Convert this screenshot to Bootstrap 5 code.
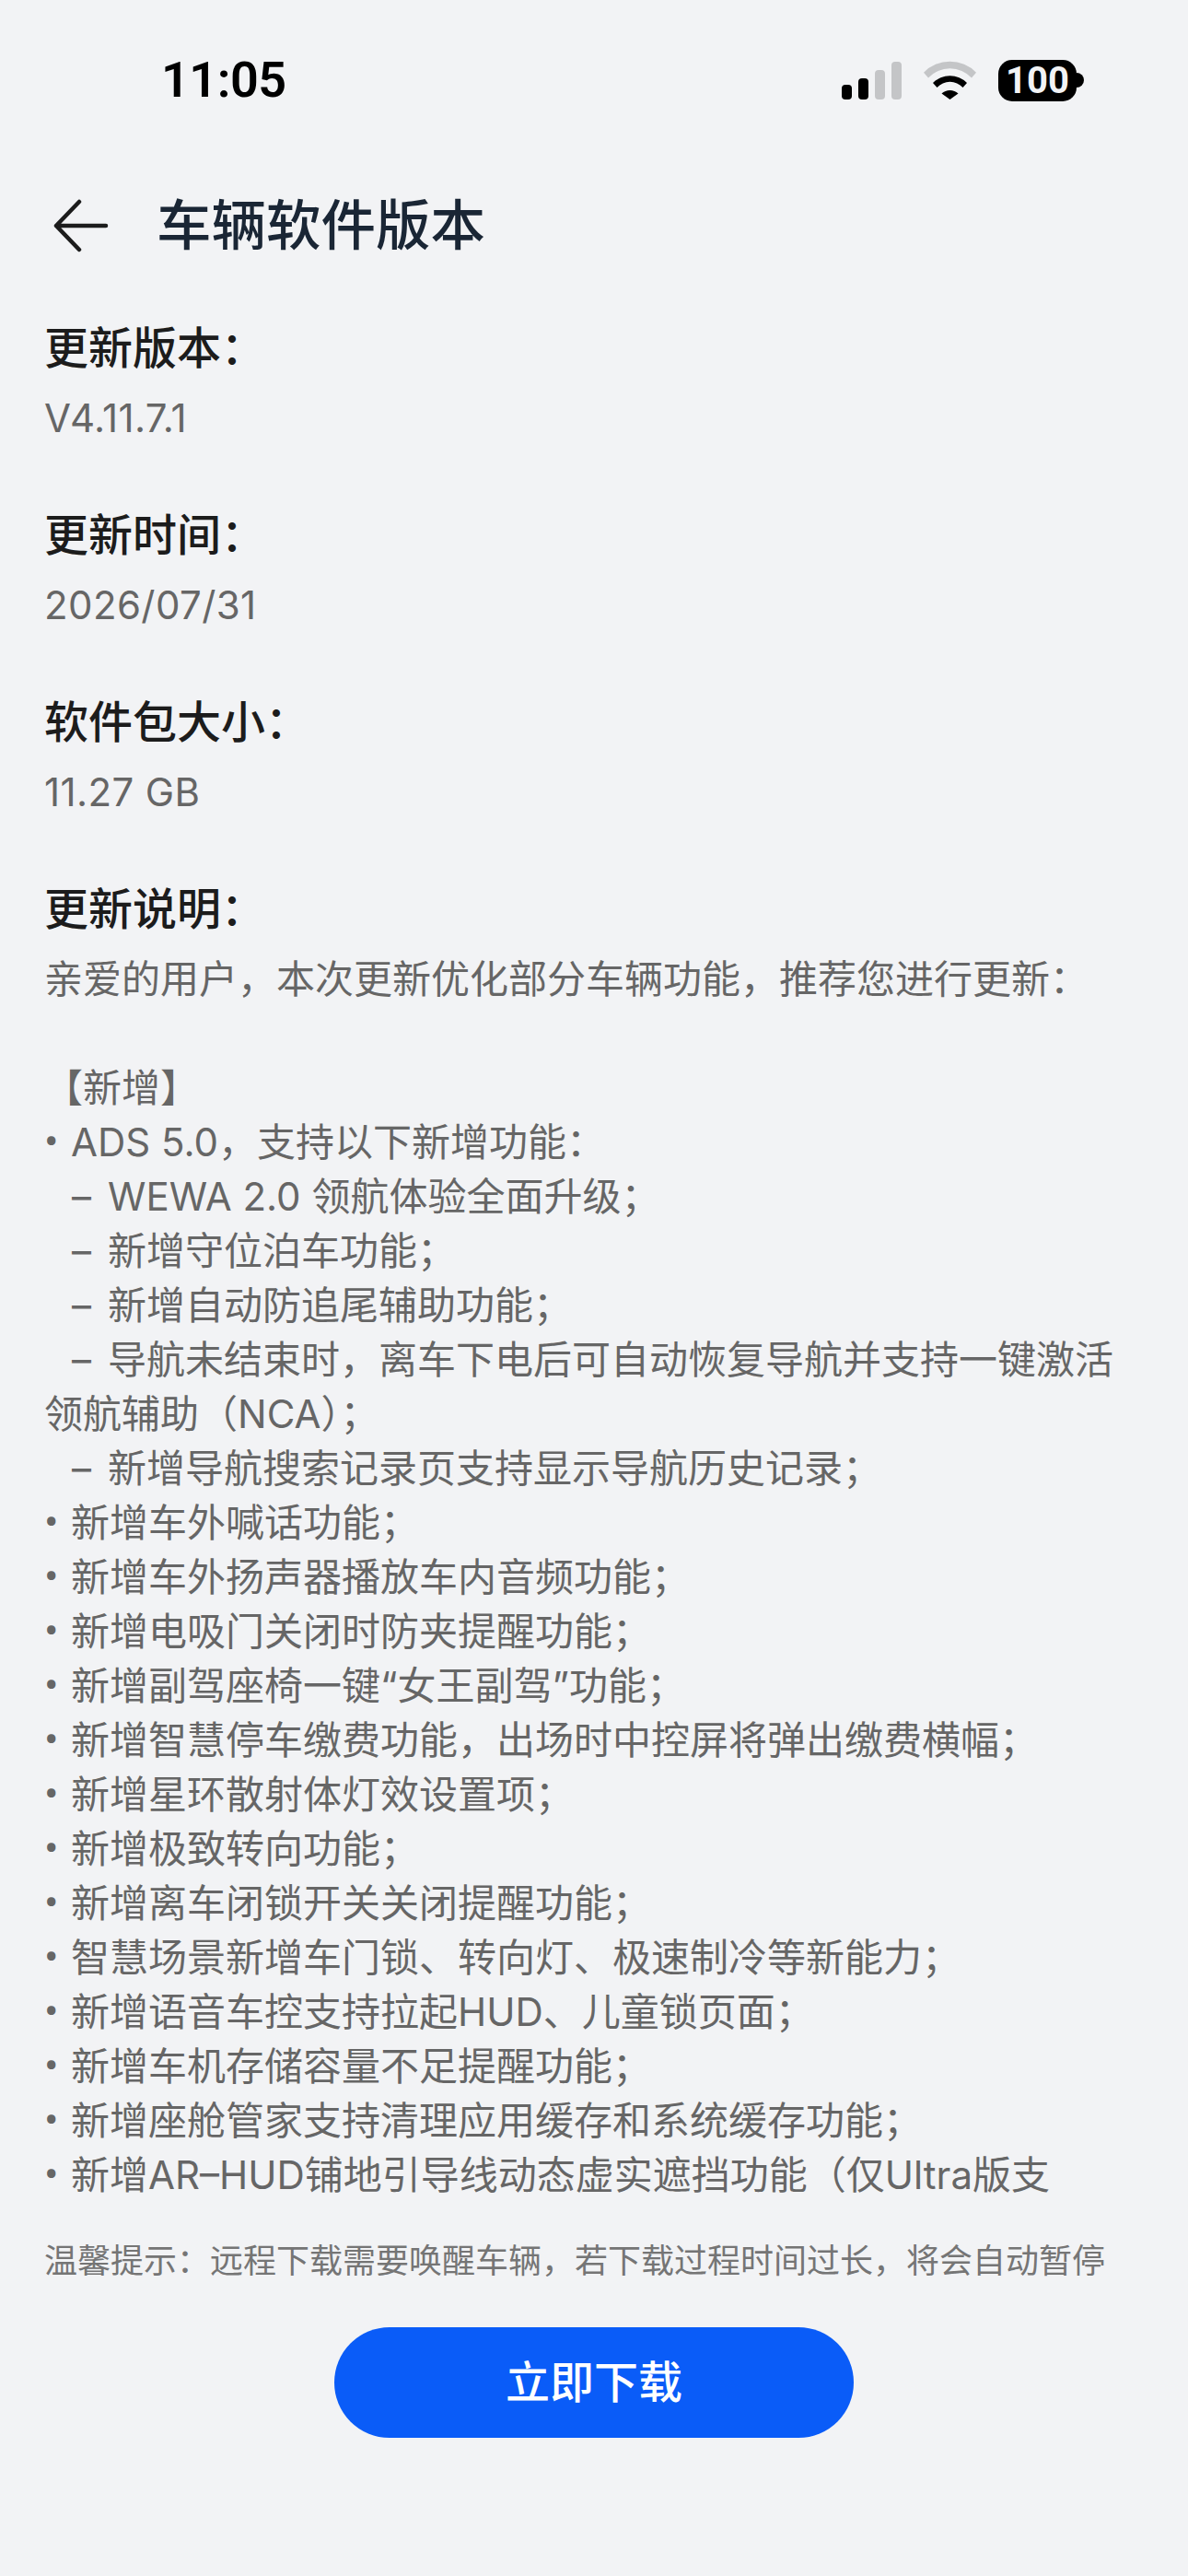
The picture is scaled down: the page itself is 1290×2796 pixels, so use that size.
<!DOCTYPE html>
<html lang="zh-CN">
<head>
  <meta charset="UTF-8" />
  <meta name="viewport" content="width=device-width, initial-scale=1" />
  <title>车辆软件版本</title>
  <link href="https://cdn.jsdelivr.net/npm/bootstrap@5.3.6/dist/css/bootstrap.min.css" rel="stylesheet"/>
  <style>
    body{
      background:#f2f3f5;
      font-family:Inter,"Noto Sans CJK SC",sans-serif;
      color:#666;
      overflow:hidden;
    }
    .phone-page{width:1290px;height:2796px}
    .status-bar{height:174px;padding:0 113px 0 175px}
    .clock{font-family:Roboto,sans-serif;font-size:54px;font-weight:600;color:#000;line-height:1;letter-spacing:-.5px}
    .batt-pill{
      width:85px;height:45px;border-radius:15px;background:#000;color:#f2f3f5;
      font-family:Roboto,sans-serif;font-size:40px;font-weight:700;line-height:45px;text-align:center;
    }
    .batt-nub{width:8px;height:16px;background:#000;border-radius:0 8px 8px 0}
    .title-row{height:142px;padding-left:58px}
    .page-title{font-size:59.5px;font-weight:500;color:#1a2635;margin:0 0 0 52px;line-height:1}
    .info-area{padding:32px 66px 0 48px;height:2113px;overflow:hidden}
    .info-head{font-size:48px;font-weight:500;color:#1c1c1c;line-height:60px;margin:0 0 16px}
    .info-val{font-size:42px;line-height:59px;margin:0 0 68px;letter-spacing:.4px}
    .notes{font-size:42px;line-height:59px;white-space:pre-wrap;margin:0}
    .dot-mark{display:inline-block;width:29px;font-family:Roboto,sans-serif;font-size:46px;line-height:1}
    .dash-mark{display:inline-block;width:69px;padding-left:30px}
    .tip-line{font-size:36px;color:#757575;line-height:50px;margin:0;padding:0 48px;white-space:nowrap;overflow:hidden;height:50px}
    .dl-wrap{padding-top:47px}
    .dl-btn{
      width:564px;height:120px;border-radius:60px;background:#0a5cf8;border:0;color:#fff;
      font-size:48px;font-weight:500;line-height:1;
    }
  </style>
</head>
<body>
  <div class="phone-page d-flex flex-column">
    <!-- STATUS BAR -->
    <div class="status-bar d-flex align-items-center justify-content-between">
      <span class="clock">11:05</span>
      <div class="d-flex align-items-center">
        <svg width="65" height="41" viewBox="0 0 65 41" class="me-4">
          <rect x="0" y="25" width="11" height="16" rx="4" fill="#000"/>
          <rect x="18" y="18" width="11" height="23" rx="4" fill="#000"/>
          <rect x="36" y="9" width="11" height="32" rx="4" fill="#c4c5c7"/>
          <rect x="54" y="0" width="11" height="41" rx="4" fill="#c4c5c7"/>
        </svg>
        <svg width="57" height="42" viewBox="0 0 57 42" class="me-4">
          <path d="M0 12.7A40 40 0 0 1 57 12.7L52 18.5A32 32 0 0 0 5 18.5Z" fill="#c4c5c7"/>
          <path d="M10 24A26 26 0 0 1 47 24L42.5 29A19 19 0 0 0 14.5 29Z" fill="#000"/>
          <path d="M19.5 35.5A13 13 0 0 1 37.5 35.5L28.5 42Z" fill="#000"/>
        </svg>
        <div class="batt-pill">100</div>
        <div class="batt-nub"></div>
      </div>
    </div>

    <!-- TITLE -->
    <div class="title-row d-flex align-items-center">
      <svg width="60" height="58" viewBox="0 0 60 58">
        <path d="M57 29H3M28 3L3 29L28 55" fill="none" stroke="#1c1c1c" stroke-width="4.5" stroke-linecap="round" stroke-linejoin="round"/>
      </svg>
      <h1 class="page-title">车辆软件版本</h1>
    </div>

    <!-- INFO -->
    <div class="info-area">
      <h2 class="info-head">更新版本：</h2>
      <p class="info-val">V4.11.7.1</p>
      <h2 class="info-head">更新时间：</h2>
      <p class="info-val">2026/07/31</p>
      <h2 class="info-head">软件包大小：</h2>
      <p class="info-val">11.27 GB</p>
      <h2 class="info-head">更新说明：</h2>
      <p class="notes">亲爱的用户，本次更新优化部分车辆功能，推荐您进行更新：

【新增】
<span class="dot-mark">•</span>ADS 5.0，支持以下新增功能：
<span class="dash-mark">–</span>WEWA 2.0 领航体验全面升级；
<span class="dash-mark">–</span>新增守位泊车功能；
<span class="dash-mark">–</span>新增自动防追尾辅助功能；
<span class="dash-mark">–</span>导航未结束时，离车下电后可自动恢复导航并支持一键激活<br>领航辅助（NCA）；
<span class="dash-mark">–</span>新增导航搜索记录页支持显示导航历史记录；
<span class="dot-mark">•</span>新增车外喊话功能；
<span class="dot-mark">•</span>新增车外扬声器播放车内音频功能；
<span class="dot-mark">•</span>新增电吸门关闭时防夹提醒功能；
<span class="dot-mark">•</span>新增副驾座椅一键“女王副驾”功能；
<span class="dot-mark">•</span>新增智慧停车缴费功能，出场时中控屏将弹出缴费横幅；
<span class="dot-mark">•</span>新增星环散射体灯效设置项；
<span class="dot-mark">•</span>新增极致转向功能；
<span class="dot-mark">•</span>新增离车闭锁开关关闭提醒功能；
<span class="dot-mark">•</span>智慧场景新增车门锁、转向灯、极速制冷等新能力；
<span class="dot-mark">•</span>新增语音车控支持拉起HUD、儿童锁页面；
<span class="dot-mark">•</span>新增车机存储容量不足提醒功能；
<span class="dot-mark">•</span>新增座舱管家支持清理应用缓存和系统缓存功能；
<span class="dot-mark">•</span>新增AR–HUD铺地引导线动态虚实遮挡功能（仅Ultra版支</p>
    </div>

    <!-- BOTTOM -->
    <p class="tip-line">温馨提示：远程下载需要唤醒车辆，若下载过程时间过长，将会自动暂停</p>
    <div class="dl-wrap d-flex justify-content-center">
      <button type="button" class="btn dl-btn">立即下载</button>
    </div>
  </div>

  <script src="https://cdn.jsdelivr.net/npm/bootstrap@5.3.6/dist/js/bootstrap.bundle.min.js"></script>
</body>
</html>
